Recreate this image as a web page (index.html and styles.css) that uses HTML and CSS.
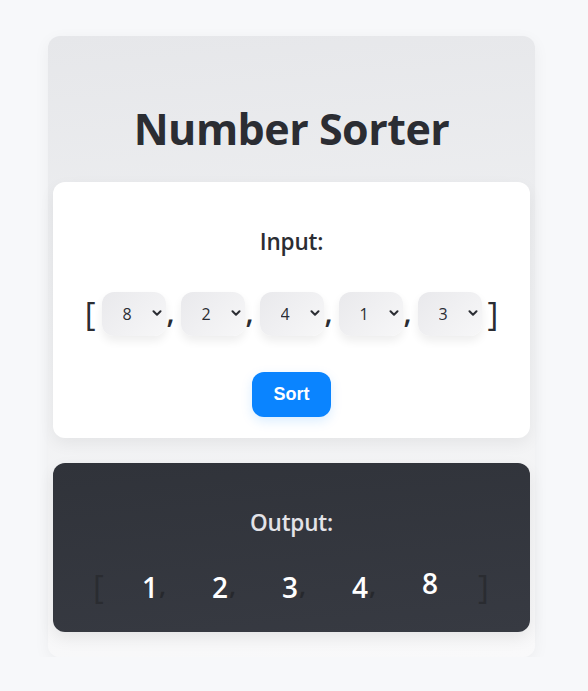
FILE: index.html
```html
<!DOCTYPE html>
<html>
<head>
<meta charset="utf-8">
<link rel="stylesheet" href="styles.css">
</head>
<body>
<div class="app">
  <h1 class="title">Number Sorter</h1>
  <div class="card input-card">
    <h2 class="label">Input:</h2>
    <div class="row">
      <span class="bracket">[</span>
      <div class="sel"><select><option>8</option></select><svg class="chev" viewBox="0 0 10 6" width="10" height="6"><path d="M1.5 1.2l3.5 3.5 3.5-3.5" fill="none" stroke="#2b2d33" stroke-width="2" stroke-linecap="round" stroke-linejoin="round"/></svg></div>
      <span class="comma">,</span>
      <div class="sel"><select><option>2</option></select><svg class="chev" viewBox="0 0 10 6" width="10" height="6"><path d="M1.5 1.2l3.5 3.5 3.5-3.5" fill="none" stroke="#2b2d33" stroke-width="2" stroke-linecap="round" stroke-linejoin="round"/></svg></div>
      <span class="comma">,</span>
      <div class="sel"><select><option>4</option></select><svg class="chev" viewBox="0 0 10 6" width="10" height="6"><path d="M1.5 1.2l3.5 3.5 3.5-3.5" fill="none" stroke="#2b2d33" stroke-width="2" stroke-linecap="round" stroke-linejoin="round"/></svg></div>
      <span class="comma">,</span>
      <div class="sel"><select><option>1</option></select><svg class="chev" viewBox="0 0 10 6" width="10" height="6"><path d="M1.5 1.2l3.5 3.5 3.5-3.5" fill="none" stroke="#2b2d33" stroke-width="2" stroke-linecap="round" stroke-linejoin="round"/></svg></div>
      <span class="comma">,</span>
      <div class="sel"><select><option>3</option></select><svg class="chev" viewBox="0 0 10 6" width="10" height="6"><path d="M1.5 1.2l3.5 3.5 3.5-3.5" fill="none" stroke="#2b2d33" stroke-width="2" stroke-linecap="round" stroke-linejoin="round"/></svg></div>
      <span class="bracket">]</span>
    </div>
    <button class="sort">Sort</button>
  </div>
  <div class="card output-card">
    <h2 class="label out-label">Output:</h2>
    <div class="orow">
      <span class="obr">[</span>
      <span class="num">1</span><span class="ocomma">,</span>
      <span class="num">2</span><span class="ocomma">,</span>
      <span class="num">3</span><span class="ocomma">,</span>
      <span class="num">4</span><span class="ocomma">,</span>
      <span class="num raised">8</span>
      <span class="obr">]</span>
    </div>
  </div>
</div>
</body>
</html>
```
FILE: styles.css
```css
* { box-sizing: border-box; }
html, body { margin: 0; padding: 0; }
body {
  background: #f7f8fa;
  font-family: "Open Sans", "Noto Sans", sans-serif;
  color: #2b2d33;
}
.app {
  width: 487px;
  margin: 36px 0 0 48px;
  padding: 0 5px 25px;
  border-radius: 12px;
  background: linear-gradient(175deg, #e6e7ea 0%, #eeeff1 40%, #f9f9fa 100%);
  box-shadow: 0 4px 16px rgba(0,0,0,0.05);
}
.title {
  margin: 0;
  padding-top: 63px;
  height: 146px;
  text-align: center;
  font-size: 43px;
  line-height: 60px;
  font-weight: 700;
  letter-spacing: -0.5px;
  color: #2b2d33;
}
.card {
  border-radius: 12px;
}
.input-card {
  background: #fff;
  height: 256px;
  padding-top: 44px;
  display: flex;
  flex-direction: column;
  align-items: center;
  box-shadow: 0 6px 16px rgba(0,0,0,0.06);
}
.label {
  margin: 0;
  font-size: 22.5px;
  line-height: 32px;
  font-weight: 600;
  letter-spacing: -0.2px;
}
.row {
  margin-top: 34px;
  display: flex;
  align-items: center;
  height: 44px;
}
.bracket {
  font-size: 33px;
  line-height: 44px;
  font-weight: 400;
  margin: 0 6px;
}
.comma {
  font-size: 30px;
  font-weight: 600;
  align-self: flex-end;
  line-height: 48px;
  width: 14px;
  text-align: left;
  margin-left: 1px;
}
.sel {
  position: relative;
  width: 64px;
  height: 44px;
}
.sel select {
  appearance: none;
  -webkit-appearance: none;
  border: none;
  width: 64px;
  height: 44px;
  border-radius: 12px;
  background: linear-gradient(135deg, #e9e9ec 0%, #f7f7f8 100%);
  box-shadow: 0 5px 10px rgba(0,0,0,0.07);
  font-family: "Open Sans", sans-serif;
  font-size: 16px;
  font-weight: 500;
  color: #2b2d33;
  padding-left: 21px;
  outline: none;
}
.chev {
  position: absolute;
  right: 4px;
  top: 18px;
  pointer-events: none;
}
.sort {
  margin-top: 36px;
  width: 79px;
  height: 45px;
  border: none;
  border-radius: 12px;
  background: #0a84ff;
  color: #fff;
  font-family: "Liberation Sans", Arial, sans-serif;
  font-weight: 700;
  font-size: 18px;
  box-shadow: 0 4px 12px rgba(10,132,255,0.15);
}
.output-card {
  margin-top: 25px;
  height: 169px;
  background: linear-gradient(175deg, #30333a 0%, #373a42 100%);
  display: flex;
  flex-direction: column;
  align-items: center;
  padding-top: 44px;
  box-shadow: 0 6px 16px rgba(0,0,0,0.08);
}
.out-label {
  color: #e3e3e8;
}
.orow {
  margin-top: 26px;
  display: flex;
  align-items: center;
  width: 100%;
  padding-left: 40px;
  height: 44px;
}
.obr {
  font-size: 33px;
  line-height: 44px;
  color: #2a2c31;
  width: 49px;
}
.obr:last-child { margin-left: 42px; }
.num {
  font-size: 28px;
  font-weight: 600;
  color: #fff;
  line-height: 44px;
  width: 14px;
  text-align: center;
  display: inline-block;
}
.ocomma {
  font-size: 26px;
  font-weight: 600;
  color: #26282d;
  line-height: 48px;
  align-self: flex-end;
  width: 56px;
  padding-left: 3px;
}
.raised { position: relative; top: -4px; }
```
